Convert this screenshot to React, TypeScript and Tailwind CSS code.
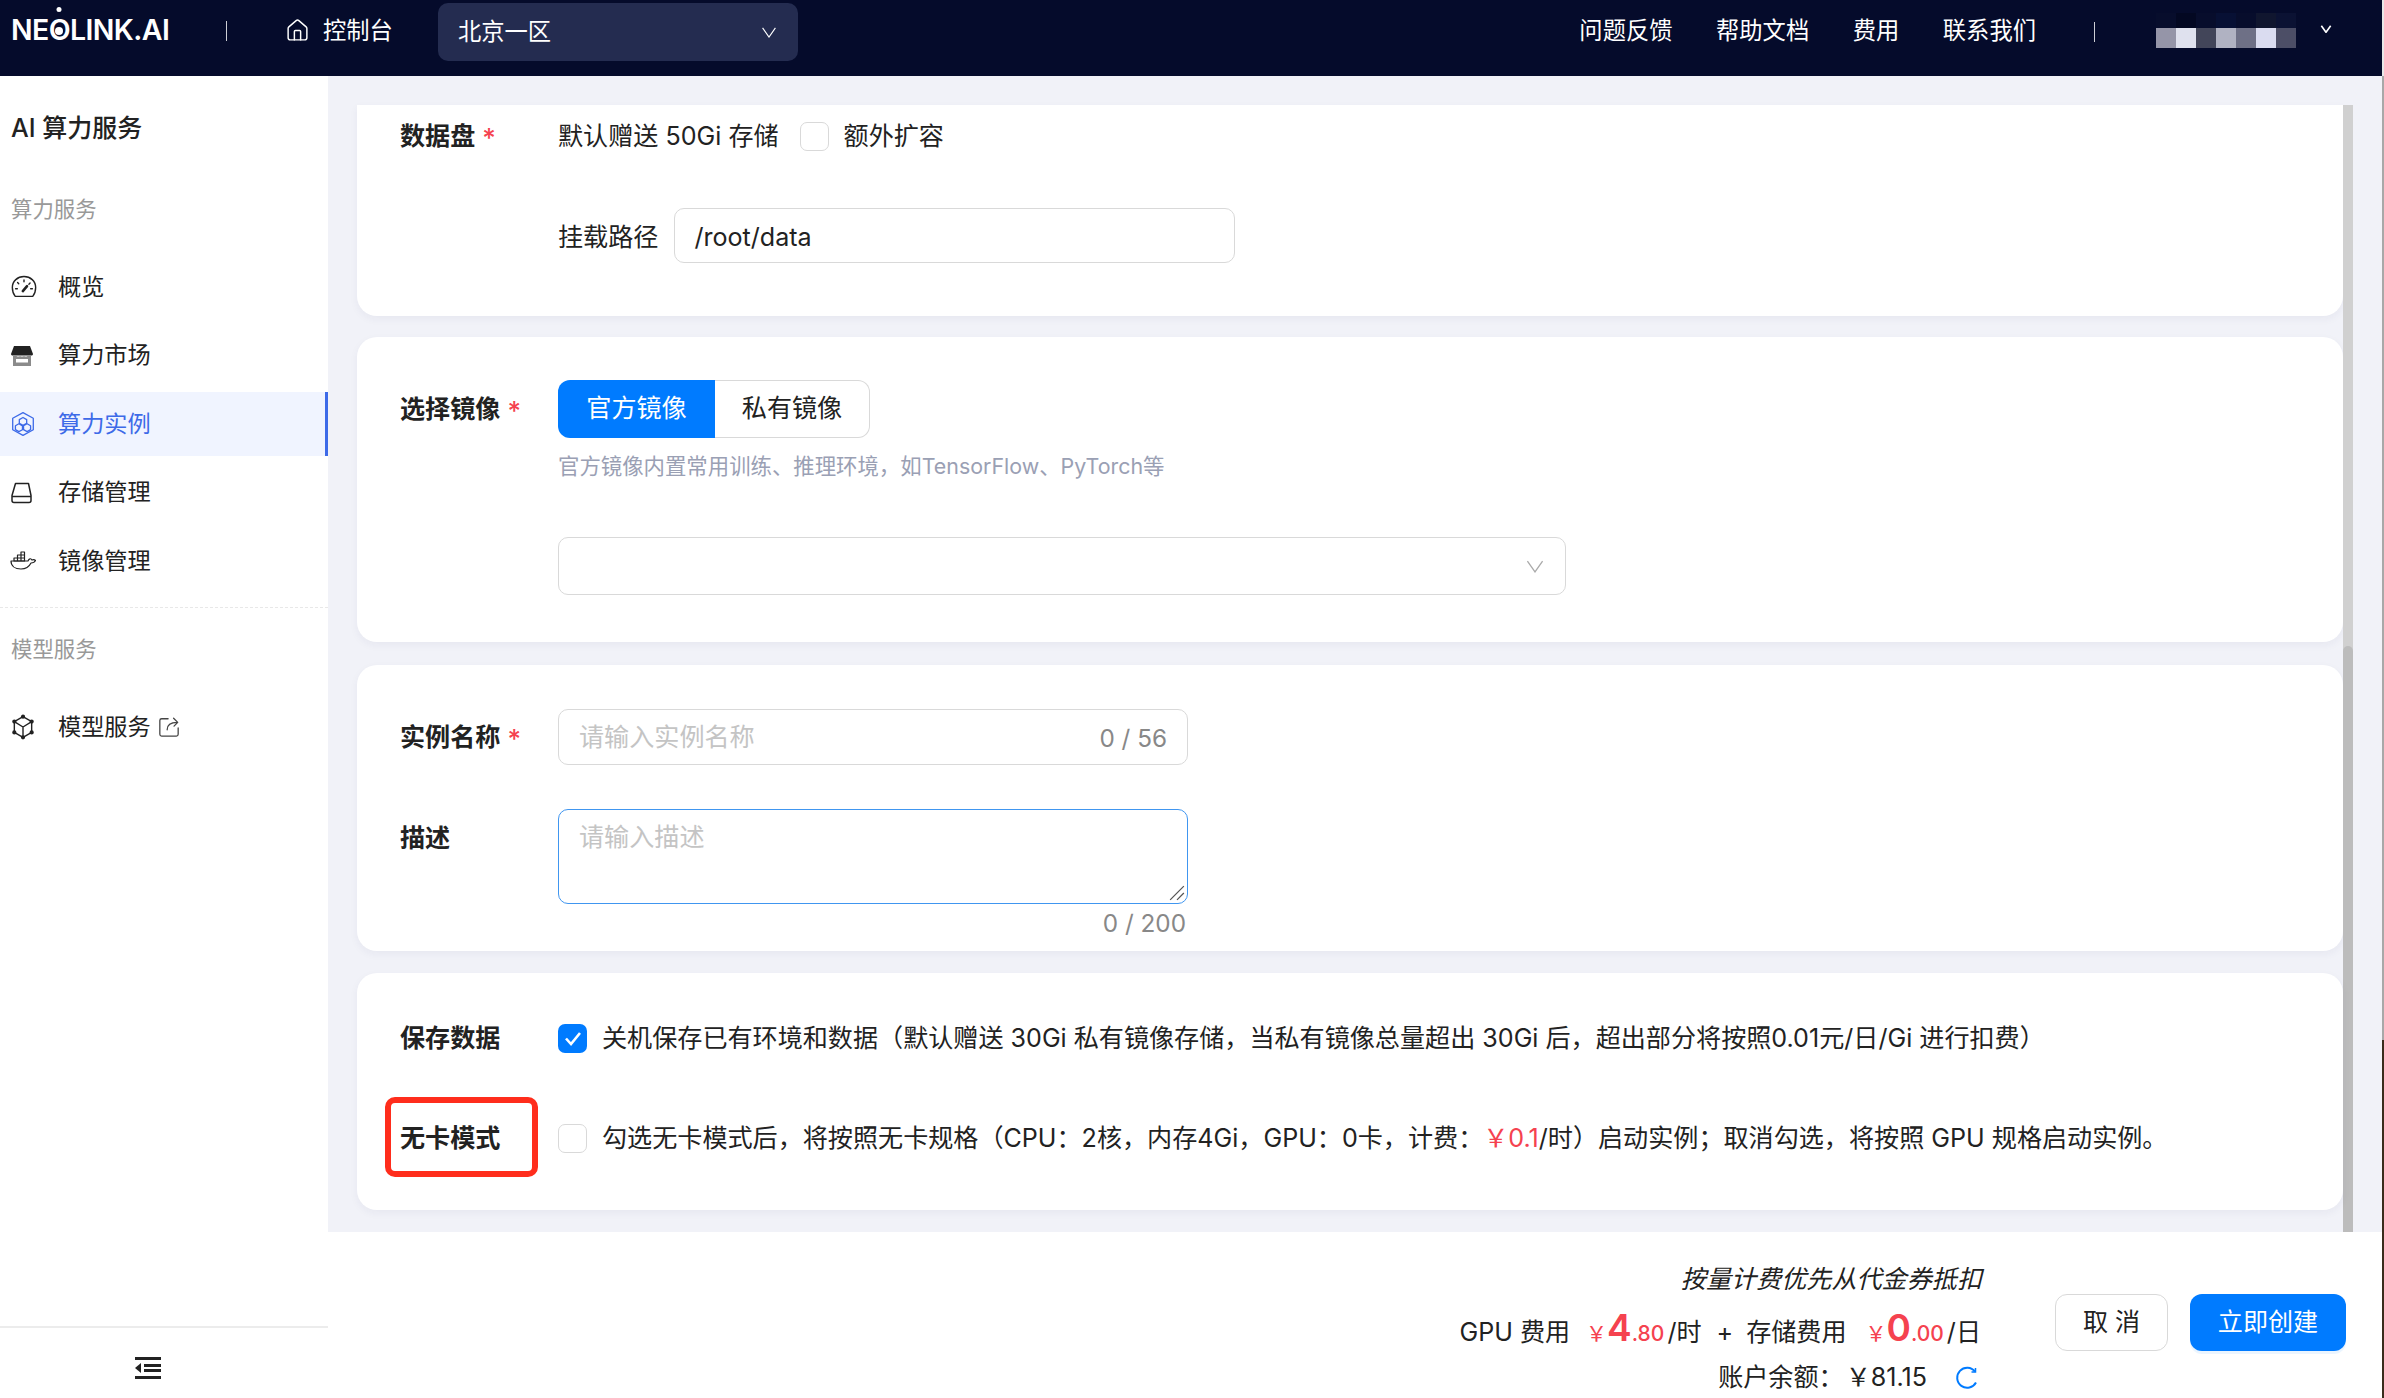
import { House } from "lucide-react";

const font = { fontFamily: '"Inter", "Noto Sans CJK SC", sans-serif' };

function GaugeIcon() {
  return (
    <svg viewBox="0 0 24 24" className="h-[28px] w-[28px]" fill="none" stroke="#222" strokeWidth="1.2" strokeLinecap="round">
      <path d="M4.5 20h15c1.6-1.9 2.5-4.4 2.5-7.5C22 7 17.5 3 12 3S2 7 2 12.5C2 15.6 2.9 18.1 4.5 20z" />
      <path d="M12 6v1.5M6.5 8.2l1 1M4.8 13.5h1.5M19.2 13.5h-1.5M17.2 8.6l-1 1" />
      <path d="M11 15.5l3.6-4.2" strokeWidth="2.2" />
    </svg>
  );
}

function StoreIcon() {
  return (
    <svg viewBox="0 0 24 24" className="h-[24px] w-[24px]">
      <path d="M4 2h16l3 8c0 1.2-1 1.5-2 1.5H3c-1 0-2-.3-2-1.5z" fill="#222" />
      <path d="M3 12h3.5c1 .8 2.5.8 3.5 0 1 .8 3 .8 4 0 1 .8 2.500.8 3.500 0H21v10H3z" fill="#8b8b8b" />
      <path d="M6 15h12v3.500H6z" fill="#fff" />
    </svg>
  );
}

function InstanceIcon() {
  return (
    <svg viewBox="0 0 24 24" className="h-[26px] w-[26px]" fill="none" stroke="#3d6ae8" strokeWidth="1.2" strokeLinejoin="round">
      <path d="M12 1.500l9.500 5.200v10.600L12 22.500l-9.500-5.200V6.700z" />
      <path d="M12 6l3.400 1.900v3.400L12 13.200l-3.400-1.900V7.900zM8.200 11.800l3.300 1.900v3.600l-3.300 1.700-3.200-1.800v-3.600zM15.800 11.800l3.200 1.800v3.600l-3.200 1.800-3.300-1.800v-3.600z" />
    </svg>
  );
}

function DiskIcon() {
  return (
    <svg viewBox="0 0 24 24" className="h-[24px] w-[24px]" fill="none" stroke="#222" strokeWidth="1.5" strokeLinejoin="round">
      <path d="M5.500 2.500h13l2.500 12v5a2 2 0 0 1-2 2H4a2 2 0 0 1-2-2v-5z" />
      <path d="M2 15.500h19" />
    </svg>
  );
}

function WhaleIcon() {
  return (
    <svg viewBox="0 0 26 20" className="h-[20px] w-[26px]" fill="none" stroke="#222" strokeWidth="1.200" strokeLinejoin="round">
      <path d="M1 10h17c1-2.500 3-3 4-1 1-.5 2.500-.5 3.500.5-1 2-3 2.500-4.500 2.500-2 4-6 6-10 6-6 0-10-3-10-8z" />
      <path d="M4 7h3.500v3H4zM7.500 7H11v3H7.500zM11 7h3.500v3H11zM7.500 4H11v3H7.500zM11 4h3.500v3H11zM11 1h3.500v3H11z" />
    </svg>
  );
}

function ModelIcon() {
  return (
    <svg viewBox="0 0 24 24" className="h-[26px] w-[26px]" fill="none" stroke="#222" strokeWidth="1.300" strokeLinejoin="round">
      <path d="M12 2.500l8 4.500v10l-8 4.500L4 17V7z" />
      <path d="M4 7l8 5 8-5M12 12v9.500" />
      <circle cx="12" cy="2.500" r="1.300" fill="#222" />
      <circle cx="20" cy="7" r="1.300" fill="#222" />
      <circle cx="20" cy="17" r="1.300" fill="#222" />
      <circle cx="12" cy="21.500" r="1.300" fill="#222" />
      <circle cx="4" cy="17" r="1.300" fill="#222" />
      <circle cx="4" cy="7" r="1.300" fill="#222" />
    </svg>
  );
}

function ExternalIcon() {
  return (
    <svg viewBox="0 0 24 24" className="h-[22px] w-[22px]" fill="none" stroke="#444" strokeWidth="1.400" strokeLinecap="round" strokeLinejoin="round">
      <path d="M11 3H4a2 2 0 0 0-2 2v15a2 2 0 0 0 2 2h16a2 2 0 0 0 2-2v-7" />
      <path d="M10 15c0-5 3-8 11-8M17 2.500l4.500 4.500-4 4" />
    </svg>
  );
}

function CollapseIcon() {
  return (
    <svg viewBox="0 0 26 24" className="h-[24px] w-[26px]" fill="#222">
      <rect x="0" y="1" width="26" height="3" />
      <rect x="9" y="8" width="17" height="3" />
      <rect x="9" y="13" width="17" height="3" />
      <rect x="0" y="20" width="26" height="3" />
      <path d="M6 7v10l-6-5z" />
    </svg>
  );
}

function Chevron({ className, stroke, strokeWidth }: { className: string; stroke: string; strokeWidth: number }) {
  return (
    <svg viewBox="0 0 16 12" className={className} fill="none" stroke={stroke} strokeWidth={strokeWidth}>
      <path d="M1 1l7 10 7-10" />
    </svg>
  );
}

function Logo() {
  return (
    <div className="ml-[11px] flex w-[159px] items-center text-[28.500px] font-semibold leading-none tracking-[-0.6px] text-white">
      <span>NE</span>
      <span className="relative">
        O
        <span className="absolute left-1/2 top-[-9px] h-[5px] w-[5px] -translate-x-1/2 rounded-full bg-white" />
        <span className="absolute left-1/2 top-1/2 h-[8px] w-[8px] -translate-x-1/2 -translate-y-1/2 rounded-full bg-white" />
      </span>
      <span>LINK.AI</span>
    </div>
  );
}

function Header() {
  const mosaic = ["#9595a8", "#dfe1ee", "#424559", "#b0b2c2", "#6e7086", "#dadcf0", "#4c4e66"];
  const top = ["#070d2c", "#030822", "#070d2c", "#071034", "#070d2c", "#10162f", "#0b1233"];
  return (
    <header className="flex h-[76px] shrink-0 items-start bg-[#050b2b] text-[23.300px] text-white">
      <div className="flex h-[61px] items-center">
        <Logo />
        <div className="ml-[56px] h-[20px] w-px bg-white/80" />
        <House className="ml-[58px] h-[25px] w-[25px]" strokeWidth={1.4} />
        <span className="ml-[13px] pt-[1px]">控制台</span>
      </div>
      <div className="ml-[45px] mt-[3px] flex h-[58px] w-[360px] items-center justify-between rounded-[10px] bg-[#242c50] pl-[20px] pr-[21px]">
        <span>北京一区</span>
        <Chevron className="h-[11px] w-[16px]" stroke="#fff" strokeWidth={1.200} />
      </div>
      <nav className="ml-auto flex h-[61px] items-center gap-[43.500px] pt-[2px]">
        <span>问题反馈</span>
        <span>帮助文档</span>
        <span>费用</span>
        <span>联系我们</span>
      </nav>
      <div className="ml-[58px] mt-[22px] h-[20px] w-px bg-white/80" />
      <div className="ml-[61px] mt-[13px] w-[140px]">
        <div className="flex h-[15px]">
          {top.map((c, i) => (
            <div key={i} className="h-full w-[20px]" style={{ background: c }} />
          ))}
        </div>
        <div className="flex h-[20px]">
          {mosaic.map((c, i) => (
            <div key={i} className="h-full w-[20px]" style={{ background: c }} />
          ))}
        </div>
      </div>
      <Chevron className="ml-[22px] mr-[48px] mt-[25px] h-[8px] w-[16px]" stroke="#fff" strokeWidth={2.400} />
    </header>
  );
}

function NavItem({ icon, label, active, extra }: { icon: React.ReactNode; label: string; active?: boolean; extra?: React.ReactNode }) {
  return (
    <div
      className={
        active
          ? "flex h-[64px] items-center border-r-[3px] border-[#3d6ae8] bg-[#f0f4ff] text-[#3d6ae8]"
          : "flex h-[64px] items-center text-[#222]"
      }
    >
      <div className="flex w-[58px] justify-start pl-[10px]">{icon}</div>
      <span>{label}</span>
      {extra}
    </div>
  );
}

function Sidebar() {
  return (
    <aside className="flex w-[328px] shrink-0 flex-col bg-white text-[23.200px]">
      <div className="mt-[34px] flex h-[36px] items-center pl-[11px] text-[25px] font-medium leading-none text-[#222]">
        AI 算力服务
      </div>
      <div className="mt-[45px] flex h-[36px] items-center pl-[11px] text-[21.400px] text-[#999]">算力服务</div>
      <div className="mt-[28px] flex flex-col gap-[4.500px]">
        <NavItem icon={<GaugeIcon />} label="概览" />
        <NavItem icon={<StoreIcon />} label="算力市场" />
        <NavItem icon={<InstanceIcon />} label="算力实例" active />
        <NavItem icon={<DiskIcon />} label="存储管理" />
        <NavItem icon={<WhaleIcon />} label="镜像管理" />
      </div>
      <div className="mt-[14px] border-t border-dashed border-[#e8e8e8]" />
      <div className="mt-[23px] flex h-[36px] items-center pl-[11px] text-[21.400px] text-[#999]">模型服务</div>
      <div className="mt-[28px]">
        <NavItem
          icon={<ModelIcon />}
          label="模型服务"
          extra={
            <span className="ml-[7px] flex">
              <ExternalIcon />
            </span>
          }
        />
      </div>
      <div className="mt-auto flex h-[72px] items-center border-t-2 border-[#ececec] pl-[135px] pt-[10px]">
        <CollapseIcon />
      </div>
    </aside>
  );
}

function Label({ text, required }: { text: string; required?: boolean }) {
  return (
    <div className="flex w-[201px] shrink-0 items-center pl-[43px] pt-[2px] font-semibold text-[#222]">
      <span>{text}</span>
      {required && <span className="ml-[7px] text-[26px] font-medium text-[#f5424f]">*</span>}
    </div>
  );
}

function Checkbox({ checked }: { checked?: boolean }) {
  return checked ? (
    <div className="flex h-[29px] w-[29px] shrink-0 items-center justify-center rounded-[7px] bg-[#007bff]">
      <svg viewBox="0 0 24 24" className="h-[24px] w-[24px]" fill="none" stroke="#fff" strokeWidth="2.600">
        <path d="M5 12.500l5 5.500 9-11" />
      </svg>
    </div>
  ) : (
    <div className="h-[29px] w-[29px] shrink-0 rounded-[7px] border border-[#d9d9d9] bg-white" />
  );
}

const card = "w-full shrink-0 rounded-[20px] bg-white shadow-[0_3px_8px_rgba(30,40,90,0.05)]";

function DiskCard() {
  return (
    <section className={`${card} h-[211px] rounded-t-none pt-[11px]`}>
      <div className="flex h-[40px] items-center">
        <Label text="数据盘" required />
        <span className="pt-[2px]">默认赠送 50Gi 存储</span>
        <div className="ml-[21px] mr-[15px] flex">
          <Checkbox />
        </div>
        <span className="pt-[2px]">额外扩容</span>
      </div>
      <div className="mt-[52px] flex h-[55px] items-center pl-[201px]">
        <span className="mr-[16px] pt-[4px]">挂载路径</span>
        <div className="flex h-full w-[561px] items-center rounded-[10px] border border-[#d9d9d9] pl-[19px] pt-[4px]">/root/data</div>
      </div>
    </section>
  );
}

function ImageCard() {
  return (
    <section className={`${card} mt-[21px] h-[305px] pt-[43px]`}>
      <div className="flex h-[58px] items-center">
        <Label text="选择镜像" required />
        <div className="flex h-full w-[312px]">
          <div className="flex h-full w-[157px] items-center justify-center rounded-l-[12px] bg-[#007bff] text-white">官方镜像</div>
          <div className="flex h-full flex-1 items-center justify-center rounded-r-[12px] border border-l-0 border-[#d9d9d9]">私有镜像</div>
        </div>
      </div>
      <div className="ml-[201px] mt-[13px] flex h-[30px] items-center text-[21.400px] text-[#9aa0b4]">
        官方镜像内置常用训练、推理环境，如TensorFlow、PyTorch等
      </div>
      <div className="ml-[201px] mt-[56px] flex h-[58px] w-[1008px] items-center justify-end rounded-[10px] border border-[#d9d9d9] pr-[21px]">
        <Chevron className="h-[13px] w-[18px]" stroke="#aaa" strokeWidth={1.200} />
      </div>
    </section>
  );
}

function NameCard() {
  return (
    <section className={`${card} mt-[23px] h-[286px] pt-[44px]`}>
      <div className="flex h-[56px] items-center">
        <Label text="实例名称" required />
        <div className="flex h-full w-[630px] items-center justify-between rounded-[10px] border border-[#d9d9d9] pl-[20px] pr-[20px] pt-[2px]">
          <span className="text-[#c4c4c4]">请输入实例名称</span>
          <span className="text-[24.300px] text-[#888]">0 / 56</span>
        </div>
      </div>
      <div className="mt-[44px] flex h-[95px] items-start">
        <div className="mt-[14px] flex h-[30px]">
          <Label text="描述" />
        </div>
        <div className="relative h-full w-[630px] rounded-[10px] border-[1.500px] border-[#4096f0] pl-[20px] pt-[9px] text-[#c4c4c4]">
          请输入描述
          <svg viewBox="0 0 14 14" className="absolute bottom-[2px] right-[2px] h-[16px] w-[16px]" fill="none" stroke="#555" strokeWidth="1.100">
            <path d="M1 13L13 1M7 13l6-6" />
          </svg>
        </div>
      </div>
      <div className="ml-[201px] mt-[4px] h-[30px] w-[628px] text-right text-[24.300px] leading-[30px] text-[#888]">0 / 200</div>
    </section>
  );
}

function ModeCard() {
  return (
    <section className={`${card} relative mt-[22px] h-[237px] pt-[45px]`}>
      <div className="flex h-[40px] items-center">
        <Label text="保存数据" />
        <Checkbox checked />
        <span className="ml-[15px] pt-[2px]">
          关机保存已有环境和数据（默认赠送 30Gi 私有镜像存储，当私有镜像总量超出 30Gi 后，超出部分将按照0.01元/日/Gi 进行扣费）
        </span>
      </div>
      <div className="mt-[60px] flex h-[40px] items-center">
        <Label text="无卡模式" />
        <Checkbox />
        <span className="ml-[15px] pt-[2px]">
          勾选无卡模式后，将按照无卡规格（CPU：2核，内存4Gi，GPU：0卡，计费：
          <span className="text-[#f5424f]">￥0.1</span>
          /时）启动实例；取消勾选，将按照 GPU 规格启动实例。
        </span>
      </div>
      <div className="absolute left-[28px] top-[124px] h-[80px] w-[153px] rounded-[10px] border-[6px] border-[#ff2d1c]" />
    </section>
  );
}

function Scrollbar() {
  return (
    <div className="flex w-[10px] shrink-0 flex-col bg-[#d0d0d0] pt-[541px]">
      <div className="flex-1 rounded-t-[5px] bg-[#bcbcbc]" />
    </div>
  );
}

function Footer() {
  return (
    <footer className="flex h-[166px] shrink-0 justify-end bg-white pr-[36px]">
      <div className="mr-[70px] flex flex-col items-end pt-[29px] text-[#222]">
        <div className="h-[36px] pr-[3px] leading-[36px] italic">按量计费优先从代金券抵扣</div>
        <div className="mt-[9px] flex h-[44px] items-baseline pr-[4px] leading-[44px]">
          <span>GPU 费用</span>
          <span className="ml-[16px] text-[21px] text-[#f5424f]">￥</span>
          <span className="text-[37px] font-semibold text-[#f5424f]">4</span>
          <span className="text-[21px] font-medium text-[#f5424f]">.80</span>
          <span className="ml-[3px]">/时</span>
          <span className="ml-[15px] mr-[13px]">+</span>
          <span>存储费用</span>
          <span className="ml-[19px] text-[21px] text-[#f5424f]">￥</span>
          <span className="text-[37px] font-semibold text-[#f5424f]">0</span>
          <span className="text-[21px] font-medium text-[#f5424f]">.00</span>
          <span className="ml-[3px]">/日</span>
        </div>
        <div className="mt-[13px] flex h-[30px] items-center pr-[6px]">
          <span>账户余额：</span>
          <span className="ml-[2px]">￥81.15</span>
          <svg viewBox="0 0 24 24" className="ml-[28px] h-[24px] w-[24px]" fill="none" stroke="#007bff" strokeWidth="2">
            <path d="M20 5.500A10 10 0 1 0 21 16.500" />
            <path d="M20.500 2v4h-4" strokeWidth="1.500" />
          </svg>
        </div>
      </div>
      <div className="flex gap-[22px] pt-[62px]">
        <div className="flex h-[57px] w-[113px] items-center justify-center rounded-[12px] border border-[#d9d9d9] text-[#222]">取 消</div>
        <div className="flex h-[57px] w-[156px] items-center justify-center rounded-[12px] bg-[#007bff] text-white shadow-[0_3px_0_rgba(0,123,255,0.08)]">立即创建</div>
      </div>
    </footer>
  );
}

export default function App() {
  return (
    <div lang="zh-CN" className="flex h-[1398px] w-[2384px] overflow-hidden bg-[#f1f2f8] text-[25.100px] text-[#222]" style={font}>
      <div className="flex min-w-0 flex-1 flex-col">
        <Header />
        <div className="flex min-h-0 flex-1">
          <Sidebar />
          <main className="flex min-w-0 flex-1 flex-col">
            <div className="flex min-h-0 flex-1 pl-[29px] pr-[29px] pt-[29px]">
              <div className="min-w-0 flex-1">
                <DiskCard />
                <ImageCard />
                <NameCard />
                <ModeCard />
              </div>
              <Scrollbar />
            </div>
            <Footer />
          </main>
        </div>
      </div>
      <div className="flex w-[2px] shrink-0 flex-col">
        <div className="h-[76px] bg-[#e8e8e8]" />
        <div className="h-[964px] bg-[#a8a8a8]" />
        <div className="flex-1 bg-[#3a2c1c]" />
      </div>
    </div>
  );
}
